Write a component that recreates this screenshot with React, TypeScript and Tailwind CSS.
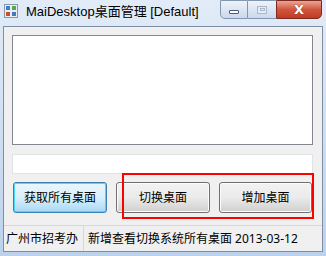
import React from "react";

const font = { fontFamily: '"Noto Sans", "Noto Sans CJK SC", sans-serif' };

function AppIcon() {
  return (
    <svg width="14" height="14" viewBox="0 0 14 14">
      <rect x="0.5" y="0.5" width="13" height="13" fill="#e8eef6" stroke="#8a98a8" />
      <rect x="2" y="2" width="4" height="4" fill="#3b7fd0" />
      <rect x="8" y="2" width="4" height="4" fill="#5aa84a" />
      <rect x="2" y="8" width="4" height="4" fill="#c8502a" />
      <rect x="8" y="8" width="4" height="4" fill="#4a78c0" />
    </svg>
  );
}

export default function App() {
  return (
    <div
      className="relative w-[326px] h-[256px] overflow-hidden flex flex-col bg-gradient-to-b from-[#e2ecf8] via-[#cfdff2] to-[#bcd2ec]"
      style={font}
    >
      {/* title bar */}
      <div className="h-[26px] flex items-start shrink-0">
        <div className="mt-[4px] ml-[4px]">
          <AppIcon />
        </div>
        <div
          className="ml-[8px] mt-[2px] text-[13px] leading-[20px] text-black"
          style={{ fontFamily: '"Liberation Sans", "Noto Sans CJK SC", sans-serif' }}
        >
          MaiDesktop桌面管理 [Default]
        </div>
        <div className="ml-auto mr-[4px] flex h-[19px]">
          <div className="w-[28px] h-[19px] border border-[#8297b0] rounded-bl-[5px] bg-gradient-to-b from-[#eef3fa] to-[#cbd9ec] flex items-center justify-center">
            <div className="w-[10px] h-[4px] mt-[4px] bg-white border border-[#4a5a70] rounded-[1px]" />
          </div>
          <div className="w-[28px] h-[19px] border-y border-[#8297b0] bg-gradient-to-b from-[#eef3fa] to-[#cbd9ec] flex items-center justify-center">
            <div className="w-[10px] h-[8px] border border-[#a9b7c8] bg-[#e4ecf6] flex items-center justify-center">
              <div className="w-[5px] h-[3px] border border-[#a9b7c8]" />
            </div>
          </div>
          <div className="w-[46px] h-[19px] border border-[#7a2a20] rounded-br-[5px] bg-gradient-to-b from-[#e8a596] via-[#d0553d] to-[#c13a22] flex items-center justify-center">
            <span className="text-white font-bold text-[13px] leading-none" style={{ fontFamily: '"DejaVu Sans", sans-serif', textShadow: "0 0 1px #5a1a10" }}>
              X
            </span>
          </div>
        </div>
      </div>

      {/* client area */}
      <div className="flex-1 mx-[3px] mb-[4px] border border-[#7d8ea5] bg-[#f0f0f0] flex flex-col">
        <div className="flex-1 flex flex-col pl-[8px] pr-[9px] pt-[8px]">
          <div className="h-[110px] bg-white border border-[#828790]" />
          <div className="mt-[9px] h-[20px] bg-white border border-[#e1e3e6]" />
          <div className="mt-[8px] flex gap-[9px]">
            <div className="ml-[1px] w-[94px] h-[31px] rounded-[3px] border border-[#3c7fb1] shadow-[inset_0_0_0_1px_#51d6fb] bg-gradient-to-b from-[#eaf6fd] via-[#d9f0fc] to-[#a7d9f5] flex items-center justify-center text-[12px] text-black">
              获取所有桌面
            </div>
            <div className="w-[94px] h-[31px] rounded-[3px] border border-[#707070] shadow-[inset_0_0_0_1px_#fcfcfc] bg-gradient-to-b from-[#f2f2f2] via-[#ebebeb] to-[#cfcfcf] flex items-center justify-center text-[12px] text-black">
              切换桌面
            </div>
            <div className="w-[93px] h-[31px] rounded-[3px] border border-[#707070] shadow-[inset_0_0_0_1px_#fcfcfc] bg-gradient-to-b from-[#f2f2f2] via-[#ebebeb] to-[#cfcfcf] flex items-center justify-center text-[12px] text-black">
              增加桌面
            </div>
          </div>
        </div>
        {/* status bar */}
        <div className="h-[26px] border-t border-[#d7d7d7] flex items-center text-[12px] text-black">
          <div className="pl-[2px] w-[80px] h-full flex items-center border-r border-[#d7d7d7]">
            广州市招考办
          </div>
          <div className="pl-[4px]">新增查看切换系统所有桌面 2013-03-12</div>
        </div>
      </div>

      {/* red highlight box */}
      <div className="absolute left-[122px] top-[173px] w-[192px] h-[46px] border-2 border-[#ff0000]" />
    </div>
  );
}
